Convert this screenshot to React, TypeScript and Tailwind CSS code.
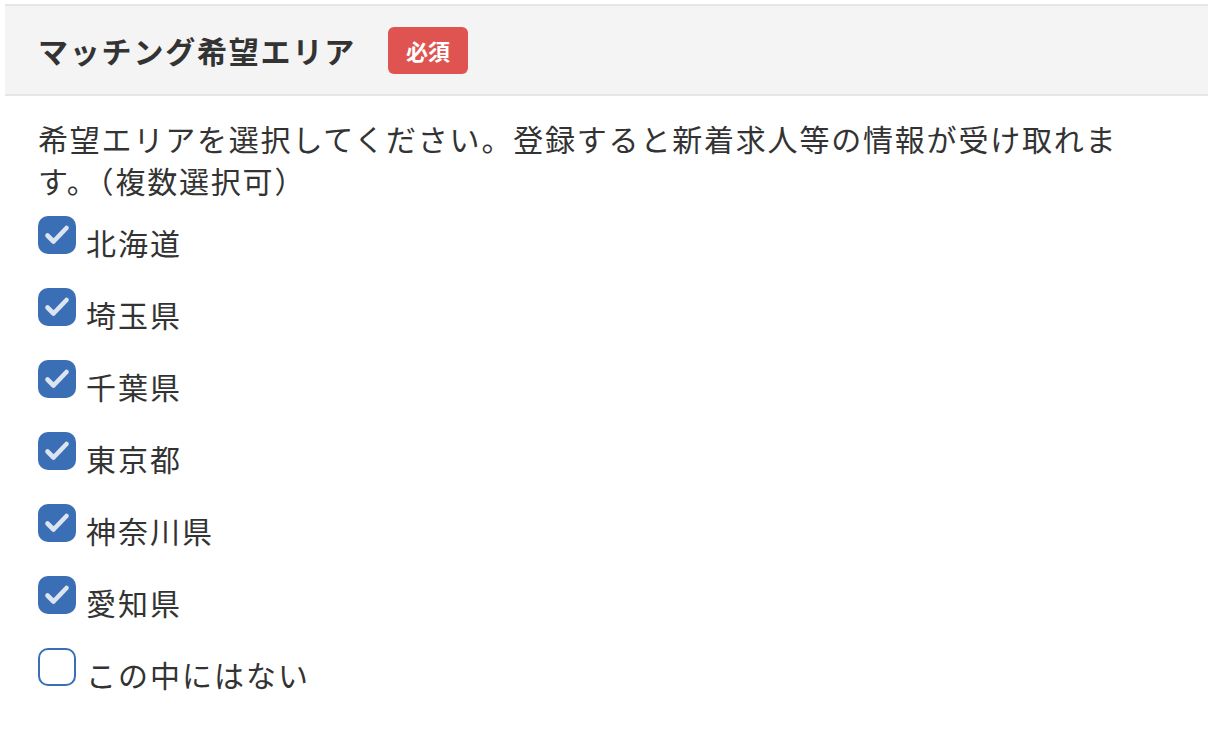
import React from "react";

const areas = [
	{ name: "北海道", checked: true },
	{ name: "埼玉県", checked: true },
	{ name: "千葉県", checked: true },
	{ name: "東京都", checked: true },
	{ name: "神奈川県", checked: true },
	{ name: "愛知県", checked: true },
	{ name: "この中にはない", checked: false },
];

const Check = ({ checked }: { checked: boolean }) =>
	checked ? (
		<span className="block h-[38px] w-[38px] shrink-0 rounded-[10px] bg-[#3a6fb6]">
			<svg width="38" height="38" viewBox="0 0 38 38" fill="none">
				<path d="M9.5 19.5l6 6L28.5 12" stroke="#dde4f1" strokeWidth="4.6" strokeLinecap="round" strokeLinejoin="round" />
			</svg>
		</span>
	) : (
		<span className="block h-[38px] w-[38px] shrink-0 rounded-[10px] border-2 border-[#3a6fb6] bg-white" />
	);

const App = () => {
	return (
		<main className="min-h-[742px] bg-white pt-1 font-['Noto_Sans_CJK_JP','Noto_Sans',sans-serif] text-[#333]">
			<section className="ml-[5px]">
				<div className="flex h-[92px] items-center gap-[32px] border-y-2 border-[#e6e6ea] bg-[#f4f4f4] pl-[33px]">
					<h2 className="text-[30px] font-bold tracking-[1.8px]">マッチング希望エリア</h2>
					<span className="flex h-[47px] w-[80px] items-center justify-center rounded-[6px] bg-[#df5450] text-[22px] font-bold text-white">
						必須
					</span>
				</div>
				<div className="pl-[33px] pt-[21px]">
					<p className="w-[1100px] text-[30px] leading-[42px] tracking-[1.8px]">
						希望エリアを選択してください。登録すると新着求人等の情報が受け取れます。（複数選択可）
					</p>
					<ul className="mt-[15px] flex flex-col gap-[34px]">
						{areas.map((a) => (
							<li key={a.name} className="flex h-[38px] items-start gap-[10px]">
								<Check checked={a.checked} />
								<span className="mt-[5px] text-[30px] leading-[42px] tracking-[2px]">{a.name}</span>
							</li>
						))}
					</ul>
				</div>
			</section>
		</main>
	);
};

export default App;
